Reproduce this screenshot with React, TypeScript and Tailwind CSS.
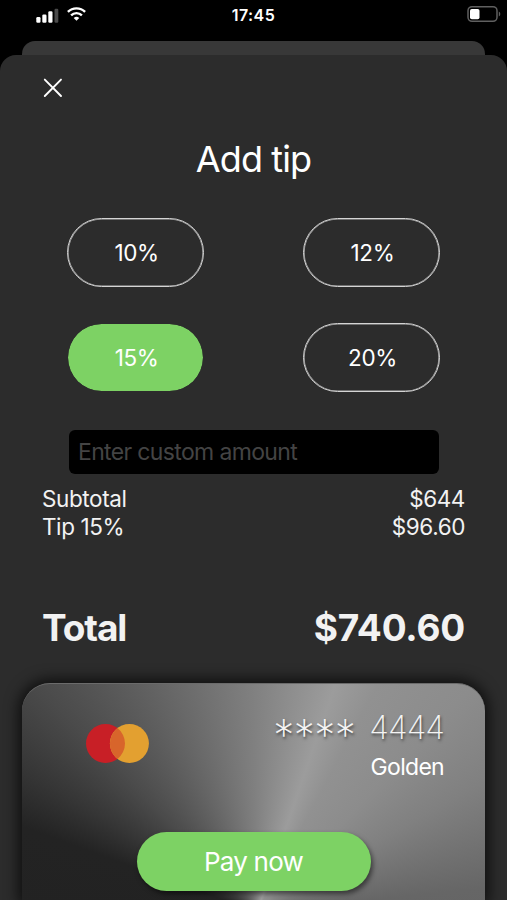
/**
 * Add tip screen
 * Tip picker, bill summary and card payment in a modal sheet
 */

import { useState } from 'react'

const SUBTOTAL = 644
const TIPS = [10, 12, 15, 20]

function StatusBar() {
  return (
    <header className="grid h-[41px] grid-cols-[1fr_auto_1fr] items-start">
      <div className="flex gap-[8px] pt-[7px] pl-9">
        <svg width="23" height="16" viewBox="0 0 23 16" aria-hidden="true">
          <rect x="0.3" y="10" width="4.2" height="5.7" rx="1.2" fill="#fff" />
          <rect x="6.3" y="7.5" width="4.2" height="8.2" rx="1.2" fill="#fff" />
          <rect x="12.3" y="4.2" width="4.2" height="11.5" rx="1.2" fill="#fff" />
          <rect x="18.5" y="1.7" width="3.8" height="14" rx="1.2" fill="#4a4a4a" />
        </svg>
        <svg
          width="19"
          height="14"
          viewBox="0 0 19 14"
          fill="none"
          stroke="#fff"
          strokeWidth="2.4"
          aria-hidden="true"
        >
          <path d="M0.9 4.9a12.2 12.2 0 0 1 17.2 0" />
          <path d="M4.1 8.3a7.7 7.7 0 0 1 10.8 0" />
          <path d="M9.5 13.8 6.7 11a4 4 0 0 1 5.6 0z" fill="#fff" stroke="none" />
        </svg>
      </div>
      <time className="pt-[7px] text-center text-[16px] leading-4 font-semibold tracking-[0.4px]">
        17:45
      </time>
      <svg
        className="mt-[5px] mr-[6px] justify-self-end"
        width="34"
        height="18"
        viewBox="0 0 34 18"
        aria-hidden="true"
      >
        <rect x="1" y="1.7" width="29" height="14.6" rx="4" fill="none" stroke="#606060" strokeWidth="1.5" />
        <rect x="3" y="4" width="9.5" height="10.2" rx="1.8" fill="#fff" />
        <path d="M31.8 6.5c2 1 2 4 0 5z" fill="#606060" />
      </svg>
    </header>
  )
}

function PaymentCard() {
  return (
    <section className="mx-[22px] flex h-[218px] flex-col rounded-t-[28px] border-t border-[#6b6b6b] bg-[conic-gradient(from_-90deg_at_235px_228px,#222_0deg,#232323_20deg,#353535_31deg,#4b4b4b_46deg,#606060_63deg,#808080_89deg,#9c9c9c_109deg,#919191_118deg,#8c8c8c_134deg,#808080_150deg,#666_174deg,#5c5c5c_220deg,#222_360deg)] shadow-[0_0_14px_4px_rgba(0,0,0,0.65)]">
      <div className="flex h-[148px] justify-between pr-[41px] pl-[64px]">
        <svg className="mt-[40px]" width="63" height="39" viewBox="0 0 63 39" aria-label="Mastercard">
          <circle cx="19.5" cy="19.5" r="19.5" fill="#c81f26" />
          <circle cx="43.4" cy="19.5" r="19.5" fill="#e3a030" />
          <path d="M31.45 4.1a19.5 19.5 0 0 1 0 30.8a19.5 19.5 0 0 1 0-30.8z" fill="#d8652b" />
        </svg>
        <div className="pt-[24px] text-right">
          <div className="flex h-[40px] justify-end gap-[14px] leading-10 font-extralight text-[#f4f4f4] [text-shadow:1px_2px_3px_rgba(0,0,0,0.55)]">
            <span className="pt-[7px] text-[42px] tracking-[-0.5px]">****</span>
            <span className="text-[32px] tracking-[-0.9px]">4444</span>
          </div>
          <p className="text-[23px] leading-[38px] tracking-[-0.7px]">Golden</p>
        </div>
      </div>
      <button className="h-[59px] w-[234px] shrink-0 self-center rounded-full bg-[#7dd264] text-[26px] tracking-[-0.8px] shadow-[2px_3px_5px_rgba(0,0,0,0.5)]">
        Pay now
      </button>
    </section>
  )
}

export default function App() {
  const [tip, setTip] = useState(15)
  const [custom, setCustom] = useState('')

  const tipAmount = custom ? Number(custom) || 0 : (SUBTOTAL * tip) / 100
  const total = SUBTOTAL + tipAmount

  return (
    <div className="h-[900px] w-[507px] overflow-hidden bg-black font-['Inter','Liberation_Sans',sans-serif] text-white">
      <StatusBar />
      {/* Sheet underneath */}
      <div className="mx-[22px] h-[14px] rounded-t-[13px] bg-[#383838]" />

      <main className="h-[845px] overflow-hidden rounded-t-[16px] bg-[#2c2c2c]">
        <button className="mt-[23px] ml-[43px] block" aria-label="Close">
          <svg width="20" height="20" viewBox="0 0 20 20" stroke="#fff" strokeWidth="1.9" strokeLinecap="round">
            <path d="M1.8 1.6 18 18M18 1.6 1.8 18" />
          </svg>
        </button>

        <h1 className="mt-[37px] text-center text-[36px] leading-[48px] tracking-[-0.9px]">Add tip</h1>

        {/* Tip options */}
        <div className="mt-[35px] grid grid-cols-2 justify-between gap-x-[99px] gap-y-[36px] px-[67px]">
          {TIPS.map((value) => (
            <button
              key={value}
              onClick={() => {
                setTip(value)
                setCustom('')
              }}
              className={`h-[69px] rounded-full pl-[2px] text-[22.5px] tracking-[-0.4px] ${
                value === tip
                  ? 'border border-[#2c2c2c] bg-[#7dd264] bg-clip-padding'
                  : 'border border-[#d4d4d4] shadow-[inset_0_0_0_0.6px_#b5b5b5]'
              }`}
            >
              {value}%
            </button>
          ))}
        </div>

        <input
          value={custom}
          onChange={(e) => setCustom(e.target.value)}
          placeholder="Enter custom amount"
          className="mt-[38px] ml-[69px] block h-[44px] w-[370px] rounded-[6px] bg-black px-[9px] text-[23px] tracking-[-0.65px] outline-none placeholder:text-[#444]"
        />

        {/* Summary */}
        <dl className="mt-[11px] px-[42px] text-[22.5px] leading-7 tracking-[-0.4px] text-[#f2f2f2]">
          <div className="flex justify-between">
            <dt>Subtotal</dt>
            <dd>${SUBTOTAL}</dd>
          </div>
          <div className="flex justify-between">
            <dt>Tip {tip}%</dt>
            <dd>${tipAmount.toFixed(2)}</dd>
          </div>
          <div className="mt-[63px] mb-[31px] flex justify-between text-[37px] leading-[48px] font-bold">
            <dt className="tracking-[-1.1px]">Total</dt>
            <dd className="tracking-[-0.2px]">${total.toFixed(2)}</dd>
          </div>
        </dl>

        <PaymentCard />
      </main>
    </div>
  )
}
